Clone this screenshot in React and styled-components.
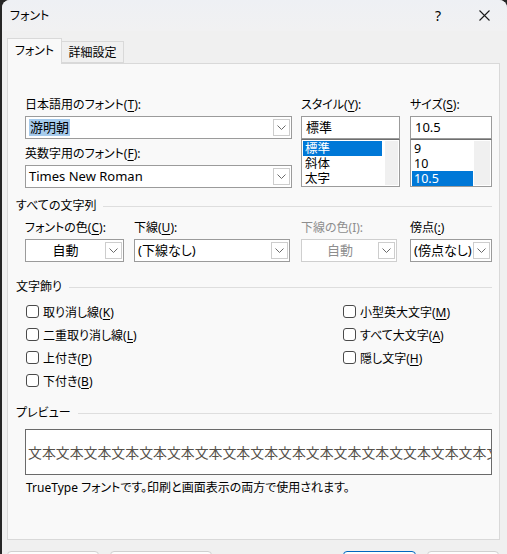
import React from 'react';
import styled, { createGlobalStyle } from 'styled-components';

const GlobalStyle = createGlobalStyle`
  html, body {
    margin: 0;
    padding: 0;
    background: #262626;
  }
  body {
    font-family: "Noto Sans", "Noto Sans CJK JP", sans-serif;
    font-size: 12px;
    color: #000;
  }
  * {
    box-sizing: border-box;
  }
`;

const Window = styled.div`
  margin-left: 2px;
  width: 505px;
  height: 554px;
  background: #f0f0f0;
  border-radius: 8px 8px 0 0;
  overflow: hidden;
  font-feature-settings: "palt";
`;

const TitleBar = styled.div`
  height: 31px;
  display: flex;
  align-items: center;
  padding-left: 8px;
  background: linear-gradient(#eef0f4, #f1f1f2);
`;

const Title = styled.div`
  flex: 1;
  line-height: 16px;
`;

const TitleButton = styled.div`
  width: 46px;
  height: 31px;
  display: flex;
  align-items: center;
  justify-content: center;
  font-size: 14px;
`;

const TabRow = styled.div`
  margin-top: 7px;
  height: 25px;
  padding-left: 5px;
  display: flex;
  align-items: flex-end;
`;

const Tab = styled.div`
  width: ${(p) => (p.$active ? '55px' : '62px')};
  height: ${(p) => (p.$active ? '26px' : '22px')};
  margin-bottom: ${(p) => (p.$active ? '-1px' : '0')};
  padding-bottom: ${(p) => (p.$active ? '3px' : '0')};
  display: flex;
  align-items: center;
  justify-content: center;
  white-space: nowrap;
  background: ${(p) => (p.$active ? '#f9f9f9' : '#f0f0f0')};
  border: 1px solid #d9d9d9;
  border-bottom: ${(p) => (p.$active ? 'none' : '1px solid #d9d9d9')};
  border-left: ${(p) => (p.$active ? '1px solid #d9d9d9' : 'none')};
  position: relative;
  z-index: ${(p) => (p.$active ? 2 : 1)};
`;

const Panel = styled.div`
  margin: 0 7px 0 5px;
  height: 477px;
  background: #f9f9f9;
  border: 1px solid #d9d9d9;
  padding-top: 33px;
  position: relative;
  z-index: 1;
`;

const FieldRow = styled.div`
  display: flex;
  padding-left: 17px;
  margin-top: ${(p) => p.$mt || 0}px;
`;

const Column = styled.div`
  width: ${(p) => p.$w}px;
  margin-right: ${(p) => p.$mr || 0}px;
  display: flex;
  flex-direction: column;
`;

const SubRow = styled.div`
  display: flex;
  gap: 10px;
`;

const FieldLabel = styled.div`
  height: 16px;
  line-height: 16px;
  margin-bottom: 3px;
  margin-top: ${(p) => p.$mt || 0}px;
  color: ${(p) => (p.$disabled ? '#8e8e8e' : '#000')};
  white-space: nowrap;
`;

const Key = styled.span`
  text-decoration: underline;
  text-underline-offset: 2px;
`;

const Combo = styled.div`
  width: ${(p) => (p.$w ? `${p.$w}px` : '100%')};
  height: 23px;
  background: #fff;
  border: 1px solid ${(p) => (p.$disabled ? '#cfcfcf' : '#9b9b9b')};
  display: flex;
  align-items: center;
  padding: 2px 1px 2px 0;
`;

const ComboText = styled.div`
  flex: 1;
  padding-left: ${(p) => (p.$center ? 0 : 3)}px;
  text-align: ${(p) => (p.$center ? 'center' : 'left')};
  font-size: 13px;
  line-height: 17px;
  color: ${(p) => (p.$disabled ? '#8e8e8e' : '#000')};
  white-space: nowrap;
  overflow: hidden;
`;

const Selected = styled.span`
  background: #a6cbec;
  padding: 0 1px;
`;

const ArrowBox = styled.div`
  width: 17px;
  height: 100%;
  border: 1px solid #cdcdcd;
  display: flex;
  align-items: center;
  justify-content: center;
`;

const TextBox = styled.div`
  height: 23px;
  background: #fff;
  border: 1px solid #9b9b9b;
  padding-left: 4px;
  font-size: 13px;
  line-height: 21px;
`;

const ListBox = styled.div`
  height: 48px;
  background: #fff;
  border: 1px solid #9b9b9b;
  border-top-color: #6f6f6f;
  display: flex;
  padding: 1px;
`;

const ListItems = styled.div`
  flex: 1;
  padding-right: ${(p) => p.$gap || 1}px;
`;

const ListItem = styled.div`
  height: 15px;
  line-height: 15px;
  font-size: 12.5px;
  padding-left: 2px;
  color: ${(p) => (p.$selected ? '#fff' : '#000')};
  background: ${(p) => (p.$selected ? '#0078d7' : 'transparent')};
`;

const ScrollTrack = styled.div`
  width: ${(p) => p.$w || 15}px;
  background: #f0f0f0;
`;

const SectionHeader = styled.div`
  display: flex;
  align-items: center;
  margin-top: ${(p) => p.$mt}px;
  padding: 0 7px 0 8px;
  height: 16px;
  line-height: 16px;

  &::after {
    content: '';
    flex: 1;
    height: 1px;
    margin-left: 7px;
    background: #dedede;
  }
`;

const CheckGrid = styled.div`
  margin-top: 5px;
  padding-left: 18px;
  display: grid;
  grid-template-columns: 317px 1fr;
  grid-template-rows: repeat(4, 23px);
  grid-auto-flow: column;
`;

const CheckItem = styled.label`
  display: flex;
  align-items: center;
  gap: 4px;
  white-space: nowrap;
`;

const CheckBox = styled.span`
  width: 13px;
  height: 13px;
  border: 1px solid #4a4a4a;
  border-radius: 3px;
  background: #fff;
`;

const PreviewBox = styled.div`
  margin: 8px 7px 0 17px;
  height: 46px;
  background: #fff;
  border: 1px solid #6a6a6a;
  display: flex;
  align-items: center;
  padding-left: 2px;
  overflow: hidden;
`;

const PreviewText = styled.div`
  font-family: "Noto Sans CJK JP", serif;
  font-feature-settings: normal;
  font-size: 13.9px;
  color: #56514a;
  white-space: nowrap;
  line-height: 18px;
`;

const Note = styled.div`
  margin: 5px 0 0 18px;
  line-height: 16px;
`;

const ButtonRow = styled.div`
  margin-top: 11px;
  padding: 0 8px 0 5px;
  display: flex;
  gap: 11px;
`;

const Button = styled.div`
  width: ${(p) => p.$w}px;
  height: 24px;
  border-radius: 4px;
  background: #fdfdfd;
  border: 1px solid ${(p) => (p.$primary ? '#0067c0' : '#d0d0d0')};
`;

const Spacer = styled.div`
  flex: 1;
`;

const Chevron = () => (
  <svg width="9" height="5" viewBox="0 0 9 5">
    <polyline points="0.5,0.5 4.5,4.5 8.5,0.5" fill="none" stroke="#6a6a6a" strokeWidth="1" />
  </svg>
);

const CloseIcon = () => (
  <svg width="11" height="11" viewBox="0 0 11 11">
    <path d="M0.5 0.5 L10.5 10.5 M10.5 0.5 L0.5 10.5" stroke="#1a1a1a" strokeWidth="1.1" fill="none" />
  </svg>
);

const DropCombo = ({ children, center, disabled, w }) => (
  <Combo $w={w} $disabled={disabled}>
    <ComboText $center={center} $disabled={disabled}>{children}</ComboText>
    <ArrowBox>
      <Chevron />
    </ArrowBox>
  </Combo>
);

const decorations = [
  ['取り消し線(', 'K', ')'],
  ['二重取り消し線(', 'L', ')'],
  ['上付き(', 'P', ')'],
  ['下付き(', 'B', ')'],
  ['小型英大文字(', 'M', ')'],
  ['すべて大文字(', 'A', ')'],
  ['隠し文字(', 'H', ')'],
];

const previewText = '文本'.repeat(13) + '文' + '文本'.repeat(5);

export default function App() {
  return (
    <>
      <GlobalStyle />
      <Window>
        <TitleBar>
          <Title>フォント</Title>
          <TitleButton>?</TitleButton>
          <TitleButton>
            <CloseIcon />
          </TitleButton>
        </TitleBar>

        <TabRow>
          <Tab $active>フォント</Tab>
          <Tab>詳細設定</Tab>
        </TabRow>

        <Panel>
          <FieldRow>
            <Column $w={267} $mr={9}>
              <FieldLabel>
                日本語用のフォント(<Key>T</Key>):
              </FieldLabel>
              <DropCombo>
                <Selected>游明朝</Selected>
              </DropCombo>
              <FieldLabel $mt={7}>
                英数字用のフォント(<Key>F</Key>):
              </FieldLabel>
              <DropCombo>Times New Roman</DropCombo>
            </Column>
            <Column $w={99} $mr={10}>
              <FieldLabel>
                スタイル(<Key>Y</Key>):
              </FieldLabel>
              <TextBox>標準</TextBox>
              <ListBox>
                <ListItems $gap={3}>
                  <ListItem $selected>標準</ListItem>
                  <ListItem>斜体</ListItem>
                  <ListItem>太字</ListItem>
                </ListItems>
                <ScrollTrack $w={13} />
              </ListBox>
            </Column>
            <Column $w={82}>
              <FieldLabel>
                サイズ(<Key>S</Key>):
              </FieldLabel>
              <TextBox>10.5</TextBox>
              <ListBox>
                <ListItems>
                  <ListItem>9</ListItem>
                  <ListItem>10</ListItem>
                  <ListItem $selected>10.5</ListItem>
                </ListItems>
                <ScrollTrack $w={16} />
              </ListBox>
            </Column>
          </FieldRow>

          <SectionHeader $mt={10}>すべての文字列</SectionHeader>
          <FieldRow $mt={6}>
            <Column $w={267} $mr={9}>
              <SubRow>
                <Column $w={99}>
                  <FieldLabel>
                    フォントの色(<Key>C</Key>):
                  </FieldLabel>
                  <DropCombo center>自動</DropCombo>
                </Column>
                <Column $w={156}>
                  <FieldLabel>
                    下線(<Key>U</Key>):
                  </FieldLabel>
                  <DropCombo>(下線なし)</DropCombo>
                </Column>
              </SubRow>
            </Column>
            <Column $w={99} $mr={10}>
              <FieldLabel $disabled>下線の色(I):</FieldLabel>
              <DropCombo center disabled w={96}>
                自動
              </DropCombo>
            </Column>
            <Column $w={82}>
              <FieldLabel>
                傍点(<Key>:</Key>)
              </FieldLabel>
              <DropCombo>(傍点なし)</DropCombo>
            </Column>
          </FieldRow>

          <SectionHeader $mt={17}>文字飾り</SectionHeader>
          <CheckGrid>
            {decorations.map(([pre, key, post]) => (
              <CheckItem key={key}>
                <CheckBox />
                <span>
                  {pre}
                  <Key>{key}</Key>
                  {post}
                </span>
              </CheckItem>
            ))}
          </CheckGrid>

          <SectionHeader $mt={13}>プレビュー</SectionHeader>
          <PreviewBox>
            <PreviewText>{previewText}</PreviewText>
          </PreviewBox>
          <Note>TrueType フォントです。印刷と画面表示の両方で使用されます。</Note>
        </Panel>

        <ButtonRow>
          <Button $w={92} />
          <Button $w={102} />
          <Spacer />
          <Button $w={73} $primary />
          <Button $w={72} />
        </ButtonRow>
      </Window>
    </>
  );
}
